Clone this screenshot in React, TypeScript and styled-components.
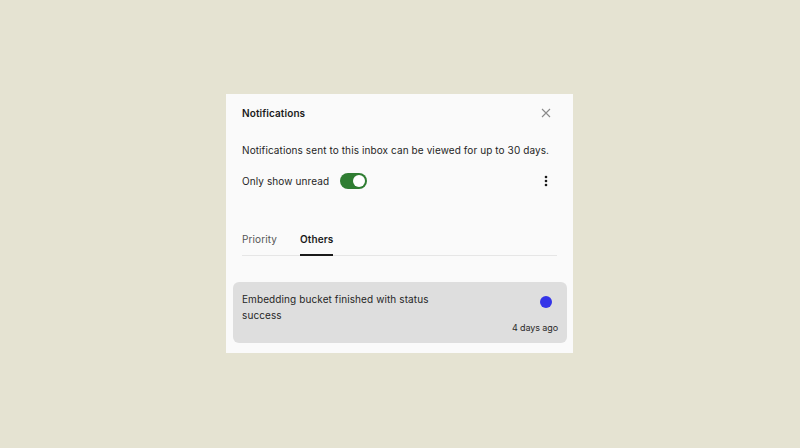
import React from 'react';
import styled, { createGlobalStyle } from 'styled-components';

const GlobalStyle = createGlobalStyle`
  html, body {
    margin: 0;
    padding: 0;
    background: #e5e3d2;
    font-family: Inter, "Liberation Sans", sans-serif;
  }
`;

const Page = styled.div`
  width: 800px;
  height: 448px;
  padding: 94px 0 0 226px;
  box-sizing: border-box;
`;

const Panel = styled.div`
  width: 347px;
  height: 259px;
  background: #fafafa;
  box-sizing: border-box;
  padding: 0 6px 10px 7px;
  display: flex;
  flex-direction: column;
  letter-spacing: 0.1px;
`;

const Inner = styled.div`
  padding: 0 10px 0 9px;
  display: flex;
  flex-direction: column;
`;

const Header = styled.div`
  height: 38px;
  display: flex;
  align-items: center;
  justify-content: space-between;
`;

const Title = styled.h2`
  margin: 0;
  font-size: 10px;
  font-weight: 600;
  color: #1a1a1a;
`;

const IconButton = styled.button`
  border: 0;
  background: none;
  padding: 0;
  width: 14px;
  height: 14px;
  display: flex;
  align-items: center;
  justify-content: center;
  color: #8a8a8a;
  cursor: pointer;
`;

const CloseButton = styled(IconButton)`
  margin-right: 4px;
`;

const Description = styled.p`
  margin: 0;
  margin-top: 11px;
  font-size: 10px;
  line-height: 14px;
  color: #1f1f1f;
  white-space: nowrap;
`;

const ToggleRow = styled.div`
  margin-top: 16px;
  height: 16px;
  display: flex;
  align-items: center;
`;

const ToggleLabel = styled.span`
  font-size: 10px;
  color: #1f1f1f;
`;

const Toggle = styled.span<{ $on: boolean }>`
  margin-left: 11px;
  width: 27px;
  height: 16px;
  border-radius: 8px;
  background: ${(p) => (p.$on ? '#2f7d32' : '#bbb')};
  position: relative;
  &::after {
    content: '';
    position: absolute;
    top: 2px;
    left: ${(p) => (p.$on ? '13px' : '2px')};
    width: 12px;
    height: 12px;
    border-radius: 50%;
    background: #fff;
  }
`;

const MoreButton = styled(IconButton)`
  margin-left: auto;
  margin-right: 4px;
  color: #1a1a1a;
`;

const Tabs = styled.div`
  margin-top: 44px;
  display: flex;
  gap: 23px;
  border-bottom: 1px solid #e6e6e6;
`;

const Tab = styled.div<{ $active?: boolean }>`
  font-size: 10px;
  line-height: 12px;
  font-weight: ${(p) => (p.$active ? 600 : 400)};
  color: ${(p) => (p.$active ? '#1a1a1a' : '#555')};
  padding-bottom: 9px;
  margin-bottom: -1px;
  border-bottom: 2px solid ${(p) => (p.$active ? '#1a1a1a' : 'transparent')};
`;

const Card = styled.div`
  margin-top: 26px;
  background: #dedede;
  border-radius: 6px;
  padding: 9px 9px 10px;
  display: flex;
  justify-content: space-between;
`;

const CardText = styled.div`
  width: 200px;
  font-size: 10px;
  line-height: 16px;
  color: #262626;
`;

const CardSide = styled.div`
  display: flex;
  flex-direction: column;
  align-items: flex-end;
  justify-content: space-between;
`;

const Dot = styled.span`
  width: 12px;
  height: 12px;
  border-radius: 50%;
  background: #3434e8;
  margin: 5px 6px 0 0;
`;

const Time = styled.span`
  margin-top: 14px;
  font-size: 9px;
  letter-spacing: -0.1px;
  color: #2a2a2a;
`;

const App = (): JSX.Element => {
  return (
    <>
      <GlobalStyle />
      <Page>
        <Panel>
          <Inner>
            <Header>
              <Title>Notifications</Title>
              <CloseButton aria-label="Close">
                <svg width="10" height="10" viewBox="0 0 10 10" fill="none" stroke="currentColor" strokeWidth="1.1">
                  <path d="M1 1l8 8M9 1L1 9" />
                </svg>
              </CloseButton>
            </Header>
            <Description>Notifications sent to this inbox can be viewed for up to 30 days.</Description>
            <ToggleRow>
              <ToggleLabel>Only show unread</ToggleLabel>
              <Toggle $on />
              <MoreButton aria-label="More">
                <svg width="4" height="12" viewBox="0 0 4 12" fill="currentColor">
                  <circle cx="2" cy="2" r="1.3" />
                  <circle cx="2" cy="6" r="1.3" />
                  <circle cx="2" cy="10" r="1.3" />
                </svg>
              </MoreButton>
            </ToggleRow>
            <Tabs>
              <Tab>Priority</Tab>
              <Tab $active>Others</Tab>
            </Tabs>
          </Inner>
          <Card>
            <CardText>Embedding bucket finished with status success</CardText>
            <CardSide>
              <Dot />
              <Time>4 days ago</Time>
            </CardSide>
          </Card>
        </Panel>
      </Page>
    </>
  );
};

export default App;
